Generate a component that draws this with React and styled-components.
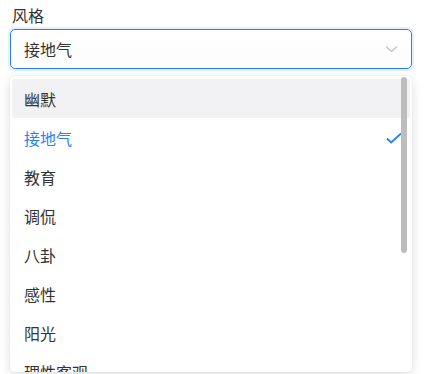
import React from 'react';
import styled, { createGlobalStyle } from 'styled-components';

const GlobalStyle = createGlobalStyle`
  html, body {
    margin: 0;
    padding: 0;
    background: #fff;
    font-family: "Noto Sans CJK SC", "Noto Sans", sans-serif;
  }
`;

const Page = styled.div`
  padding: 3px 18px 0 10px;
  height: 374px;
  box-sizing: border-box;
  overflow: hidden;
`;

const Label = styled.div`
  font-size: 16px;
  line-height: 24px;
  color: #333;
  padding-left: 2px;
  margin-bottom: 2px;
`;

const SelectBox = styled.div`
  height: 40px;
  box-sizing: border-box;
  border: 1px solid #2b7ff5;
  border-radius: 5px;
  box-shadow: 0 0 0 2px rgba(43, 127, 245, 0.12);
  display: flex;
  align-items: center;
  justify-content: space-between;
  padding: 0 13px 0 13px;
  font-size: 16px;
  color: #333;
  background: linear-gradient(#fff, #fcfcfc);
`;

const Dropdown = styled.div`
  position: relative;
  margin-top: 7px;
  height: 296px;
  border-radius: 5px;
  background: #fff;
  box-shadow: 0 3px 12px rgba(0, 0, 0, 0.12), 0 0 2px rgba(0, 0, 0, 0.08);
  overflow: hidden;
`;

const List = styled.div`
  padding: 3px 2px;
`;

const Item = styled.div`
  height: 39px;
  display: flex;
  align-items: center;
  justify-content: space-between;
  padding: 0 8px 0 12px;
  border-radius: 3px;
  font-size: 16px;
  color: ${p => (p.$selected ? '#2b7ff5' : '#333')};
  background: ${p => (p.$hover ? '#f2f2f4' : 'transparent')};
`;

const Thumb = styled.div`
  position: absolute;
  top: 1px;
  right: 5px;
  width: 6px;
  height: 176px;
  border-radius: 3px;
  background: #bdbdbd;
`;

const Chevron = () => (
  <svg width="13" height="8" viewBox="0 0 13 8" fill="none">
    <path d="M1 1.5l5.5 5 5.5-5" stroke="#c0c0c0" strokeWidth="1.2" />
  </svg>
);

const Check = () => (
  <svg width="16" height="12" viewBox="0 0 16 12" fill="none">
    <path d="M1 6.5l4.2 4L15 1.5" stroke="#2b7ff5" strokeWidth="1.8" />
  </svg>
);

const options = ['幽默', '接地气', '教育', '调侃', '八卦', '感性', '阳光', '理性客观'];

export default function App() {
  const value = '接地气';
  return (
    <Page>
      <GlobalStyle />
      <Label>风格</Label>
      <SelectBox>
        <span>{value}</span>
        <Chevron />
      </SelectBox>
      <Dropdown>
        <List>
          {options.map((o, i) => (
            <Item key={o} $hover={i === 0} $selected={o === value}>
              <span>{o}</span>
              {o === value && <Check />}
            </Item>
          ))}
        </List>
        <Thumb />
      </Dropdown>
    </Page>
  );
}
